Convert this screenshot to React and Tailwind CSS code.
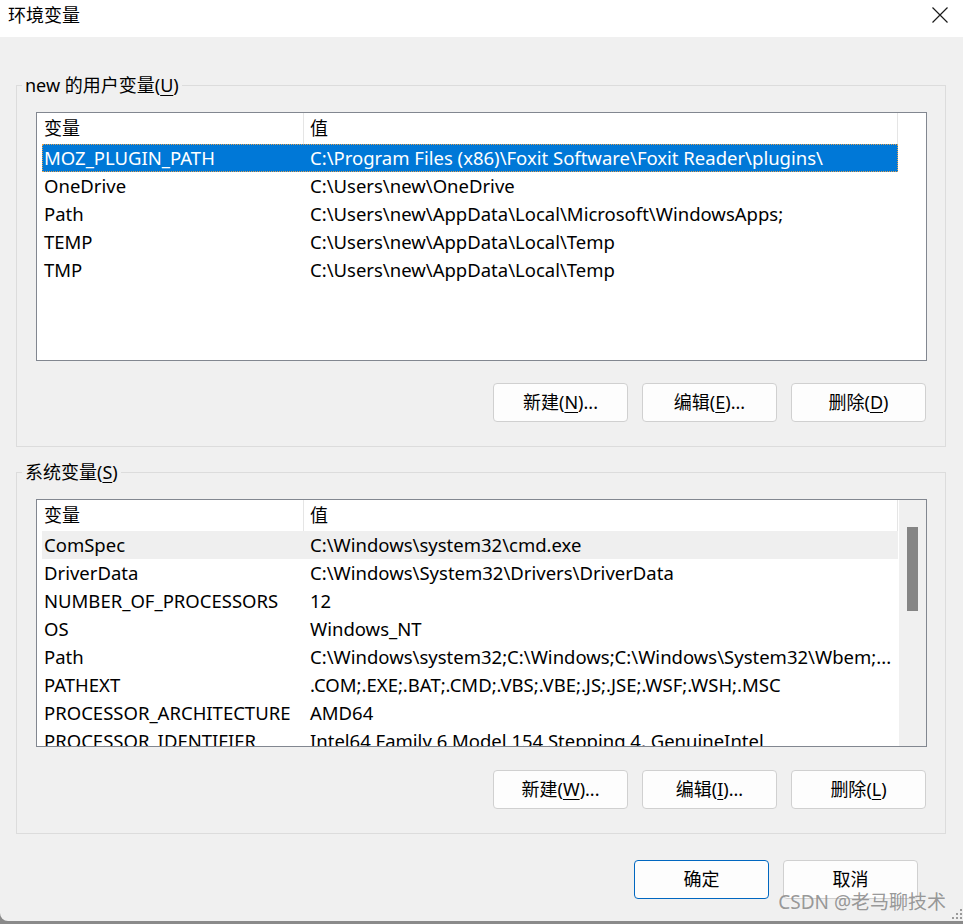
import React from "react";

const userVars = [
  ["MOZ_PLUGIN_PATH", "C:\\Program Files (x86)\\Foxit Software\\Foxit Reader\\plugins\\"],
  ["OneDrive", "C:\\Users\\new\\OneDrive"],
  ["Path", "C:\\Users\\new\\AppData\\Local\\Microsoft\\WindowsApps;"],
  ["TEMP", "C:\\Users\\new\\AppData\\Local\\Temp"],
  ["TMP", "C:\\Users\\new\\AppData\\Local\\Temp"],
];

const systemVars = [
  ["ComSpec", "C:\\Windows\\system32\\cmd.exe"],
  ["DriverData", "C:\\Windows\\System32\\Drivers\\DriverData"],
  ["NUMBER_OF_PROCESSORS", "12"],
  ["OS", "Windows_NT"],
  ["Path", "C:\\Windows\\system32;C:\\Windows;C:\\Windows\\System32\\Wbem;..."],
  ["PATHEXT", ".COM;.EXE;.BAT;.CMD;.VBS;.VBE;.JS;.JSE;.WSF;.WSH;.MSC"],
  ["PROCESSOR_ARCHITECTURE", "AMD64"],
  ["PROCESSOR_IDENTIFIER", "Intel64 Family 6 Model 154 Stepping 4, GenuineIntel"],
];

const Mnemonic = ({ label, k, tail = "" }) => (
  <span>
    {label}(<u className="underline-offset-[3px] decoration-1">{k}</u>){tail}
  </span>
);

const Button = ({ children, primary }) => (
  <button
    className={
      primary
        ? "h-[39px] w-[135px] rounded-[4px] border border-[#0067c0] bg-[#fdfdfd] text-[18px] text-black"
        : "h-[39px] w-[135px] rounded-[4px] border border-[#d0d0d0] bg-[#fdfdfd] text-[18px] text-black"
    }
  >
    {children}
  </button>
);

const VarList = ({ rows, height, selected, hover, scrollbar }) => (
  <div className="flex overflow-hidden border border-[#828790] bg-white" style={{ height }}>
    <div className="w-[861px] shrink-0">
      <div className="flex h-[31px] items-center text-[18px] text-black">
        <div className="flex h-full w-[267px] items-center border-r border-[#e5e5e5] pl-[7px]">变量</div>
        <div className="flex h-full flex-1 items-center border-r border-[#e5e5e5] pl-[6px]">值</div>
      </div>
      {rows.map(([name, value], i) => (
        <div
          key={name + i}
          className={
            i === selected
              ? "ml-[5px] flex h-[28px] items-center whitespace-nowrap border border-dotted border-[#e0a050] bg-[#0078d7] text-[18.5px] text-white"
              : i === hover
              ? "ml-[5px] flex h-[28px] items-center whitespace-nowrap border border-transparent bg-[#efefef] text-[18.5px] text-black"
              : "ml-[5px] flex h-[28px] items-center whitespace-nowrap border border-transparent text-[18.5px] text-black"
          }
        >
          <div className="w-[261px] shrink-0 pl-[1px]">{name}</div>
          <div className="pl-[6px]">{value}</div>
        </div>
      ))}
    </div>
    {scrollbar ? (
      <div className="ml-auto flex w-[27px] justify-center bg-[#f0f0f0] pt-[27px]">
        <div className="h-[84px] w-[11px] bg-[#858585]" />
      </div>
    ) : null}
  </div>
);

const App = () => {
  return (
    <div className="h-[924px] w-[963px] bg-[#8a8a8a] font-['Noto_Sans','Noto_Sans_CJK_SC',sans-serif] text-[18px] text-black">
      <div className="relative flex h-[921px] flex-col overflow-hidden rounded-bl-[8px] bg-[#f0f0f0]">
        <div className="flex h-[37px] shrink-0 items-start justify-between bg-white pl-[8px] pr-[15px] pt-[3px]">
          <span className="leading-[24px]">环境变量</span>
          <svg width="16" height="16" viewBox="0 0 16 16" className="mt-[4px]">
            <path d="M0.5 0.5 L15.5 15.5 M15.5 0.5 L0.5 15.5" stroke="#1a1a1a" strokeWidth="1.2" fill="none" />
          </svg>
        </div>

        <div className="flex flex-1 flex-col pl-[16px] pr-[17px]">
          <fieldset className="mt-[36px] border border-[#dcdcdc] pb-[24px] pl-[19px] pr-[18px] pt-[15px]">
            <legend className="-ml-[14px] px-[3px] leading-[24px]">
              new 的用户变量(<u className="underline-offset-[3px] decoration-1">U</u>)
            </legend>
            <VarList rows={userVars} height={249} selected={0} />
            <div className="mt-[22px] flex justify-end gap-[14px] pr-[1px]">
              <Button><Mnemonic label="新建" k="N" tail="..." /></Button>
              <Button><Mnemonic label="编辑" k="E" tail="..." /></Button>
              <Button><Mnemonic label="删除" k="D" /></Button>
            </div>
          </fieldset>

          <fieldset className="mt-[13px] border border-[#dcdcdc] pb-[24px] pl-[19px] pr-[18px] pt-[15px]">
            <legend className="-ml-[14px] px-[3px] leading-[24px]">
              系统变量(<u className="underline-offset-[3px] decoration-1">S</u>)
            </legend>
            <VarList rows={systemVars} height={248} hover={0} scrollbar />
            <div className="mt-[23px] flex justify-end gap-[14px] pr-[1px]">
              <Button><Mnemonic label="新建" k="W" tail="..." /></Button>
              <Button><Mnemonic label="编辑" k="I" tail="..." /></Button>
              <Button><Mnemonic label="删除" k="L" /></Button>
            </div>
          </fieldset>

          <div className="mr-[28px] mt-[26px] flex justify-end gap-[14px]">
            <Button primary>确定</Button>
            <Button>取消</Button>
          </div>
        </div>

        <div className="pointer-events-none absolute bottom-[6px] right-[17px] text-[19px] leading-[26px] text-[#8c8c8c]/90">
          CSDN @老马聊技术
        </div>
        <svg width="10" height="10" viewBox="0 0 10 10" className="absolute bottom-[2px] right-[1px]">
          <rect x="8" y="0" width="2" height="2" fill="#9a9a9a" />
          <rect x="4" y="4" width="2" height="2" fill="#9a9a9a" />
          <rect x="8" y="4" width="2" height="2" fill="#9a9a9a" />
          <rect x="0" y="8" width="2" height="2" fill="#9a9a9a" />
          <rect x="4" y="8" width="2" height="2" fill="#9a9a9a" />
          <rect x="8" y="8" width="2" height="2" fill="#9a9a9a" />
        </svg>
      </div>
    </div>
  );
};

export default App;
